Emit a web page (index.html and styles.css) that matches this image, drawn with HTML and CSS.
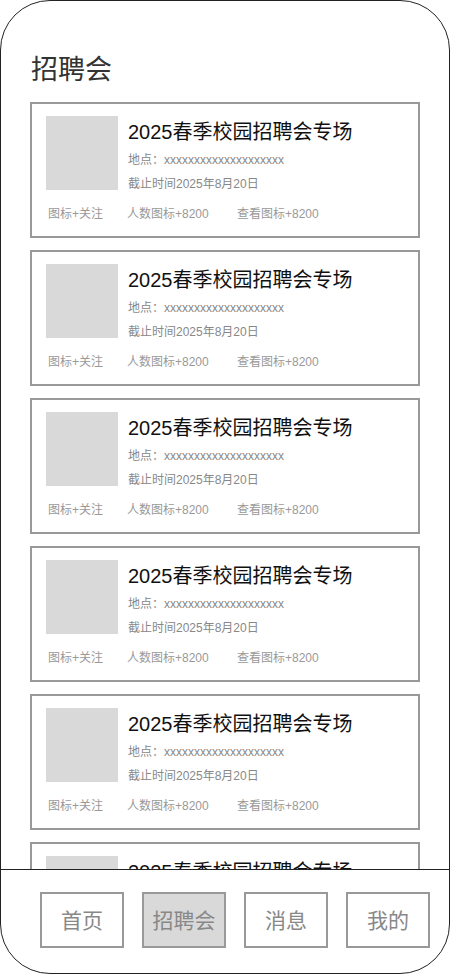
FILE: index.html
```html
<!DOCTYPE html>
<html lang="zh-CN">

<head>
    <meta charset="UTF-8">
    <title>招聘会</title>
    <link rel="stylesheet" href="styles.css">
</head>

<body>

    <div class="phone">

        <h1 class="page-title">招聘会</h1>

        <!-- Fair list start -->
        <div class="fair-list">

            <div class="fair-card">
                <div class="fair-top">
                    <div class="thumb"></div>
                    <div class="fair-info">
                        <div class="fair-name">2025春季校园招聘会专场</div>
                        <div class="fair-place">地点：xxxxxxxxxxxxxxxxxxxx</div>
                        <div class="fair-date">截止时间2025年8月20日</div>
                    </div>
                </div>
                <div class="fair-meta">
                    <span class="meta-follow">图标+关注</span>
                    <span class="meta-people">人数图标+8200</span>
                    <span>查看图标+8200</span>
                </div>
            </div>

            <div class="fair-card">
                <div class="fair-top">
                    <div class="thumb"></div>
                    <div class="fair-info">
                        <div class="fair-name">2025春季校园招聘会专场</div>
                        <div class="fair-place">地点：xxxxxxxxxxxxxxxxxxxx</div>
                        <div class="fair-date">截止时间2025年8月20日</div>
                    </div>
                </div>
                <div class="fair-meta">
                    <span class="meta-follow">图标+关注</span>
                    <span class="meta-people">人数图标+8200</span>
                    <span>查看图标+8200</span>
                </div>
            </div>

            <div class="fair-card">
                <div class="fair-top">
                    <div class="thumb"></div>
                    <div class="fair-info">
                        <div class="fair-name">2025春季校园招聘会专场</div>
                        <div class="fair-place">地点：xxxxxxxxxxxxxxxxxxxx</div>
                        <div class="fair-date">截止时间2025年8月20日</div>
                    </div>
                </div>
                <div class="fair-meta">
                    <span class="meta-follow">图标+关注</span>
                    <span class="meta-people">人数图标+8200</span>
                    <span>查看图标+8200</span>
                </div>
            </div>

            <div class="fair-card">
                <div class="fair-top">
                    <div class="thumb"></div>
                    <div class="fair-info">
                        <div class="fair-name">2025春季校园招聘会专场</div>
                        <div class="fair-place">地点：xxxxxxxxxxxxxxxxxxxx</div>
                        <div class="fair-date">截止时间2025年8月20日</div>
                    </div>
                </div>
                <div class="fair-meta">
                    <span class="meta-follow">图标+关注</span>
                    <span class="meta-people">人数图标+8200</span>
                    <span>查看图标+8200</span>
                </div>
            </div>

            <div class="fair-card">
                <div class="fair-top">
                    <div class="thumb"></div>
                    <div class="fair-info">
                        <div class="fair-name">2025春季校园招聘会专场</div>
                        <div class="fair-place">地点：xxxxxxxxxxxxxxxxxxxx</div>
                        <div class="fair-date">截止时间2025年8月20日</div>
                    </div>
                </div>
                <div class="fair-meta">
                    <span class="meta-follow">图标+关注</span>
                    <span class="meta-people">人数图标+8200</span>
                    <span>查看图标+8200</span>
                </div>
            </div>

            <div class="fair-card">
                <div class="fair-top">
                    <div class="thumb"></div>
                    <div class="fair-info">
                        <div class="fair-name">2025春季校园招聘会专场</div>
                        <div class="fair-place">地点：xxxxxxxxxxxxxxxxxxxx</div>
                        <div class="fair-date">截止时间2025年8月20日</div>
                    </div>
                </div>
                <div class="fair-meta">
                    <span class="meta-follow">图标+关注</span>
                    <span class="meta-people">人数图标+8200</span>
                    <span>查看图标+8200</span>
                </div>
            </div>

        </div>
        <!-- Fair list end -->

        <div class="tab-bar">
            <div class="tab">首页</div>
            <div class="tab active">招聘会</div>
            <div class="tab">消息</div>
            <div class="tab">我的</div>
        </div>

    </div>

</body>

</html>
```

FILE: styles.css
```css
:root {
    --frame: #222222;
    --border: #999999;
    --thumb: #d9d9d9;
    --text: #111111;
    --muted: #888888;
    --light: #999999;
}

* {
    box-sizing: border-box;
}

body {
    margin: 0;
    background: #ffffff;
    font-family: "Liberation Sans", "Noto Sans CJK SC", sans-serif;
    color: var(--text);
}

.phone {
    width: 450px;
    height: 974px;
    border: 1px solid var(--frame);
    border-radius: 50px;
    display: flex;
    flex-direction: column;
    overflow: hidden;
    background: #ffffff;
}

.page-title {
    margin: 0;
    padding: 49px 0 0 30px;
    height: 101px;
    font-size: 27px;
    font-weight: 400;
    line-height: 40px;
    color: #333333;
}

.fair-list {
    flex: 1;
    overflow: hidden;
    padding: 0 29px;
    display: flex;
    flex-direction: column;
    gap: 12px;
}

.fair-card {
    flex-shrink: 0;
    height: 136px;
    border: 2px solid var(--border);
    padding: 12px 14px 0 14px;
}

.fair-top {
    display: flex;
    gap: 10px;
}

.thumb {
    width: 72px;
    height: 74px;
    background: var(--thumb);
    flex-shrink: 0;
}

.fair-info {
    padding-top: 3px;
}

.fair-name {
    font-size: 20px;
    line-height: 26px;
    color: var(--text);
}

.fair-place {
    font-size: 12px;
    line-height: 14px;
    margin-top: 8px;
    color: var(--muted);
}

.fair-date {
    font-size: 12px;
    line-height: 16px;
    margin-top: 9px;
    color: var(--muted);
}

.fair-meta {
    margin-top: 14px;
    padding-left: 2px;
    display: flex;
    font-size: 12px;
    line-height: 16px;
    color: var(--light);
}

.meta-follow {
    width: 79px;
}

.meta-people {
    width: 110px;
}

.tab-bar {
    flex-shrink: 0;
    height: 104px;
    border-top: 1px solid var(--frame);
    display: flex;
    gap: 18px;
    padding: 22px 0 0 39px;
}

.tab {
    width: 84px;
    height: 56px;
    border: 2px solid var(--border);
    display: flex;
    align-items: center;
    justify-content: center;
    font-size: 21px;
    line-height: 1;
    color: var(--muted);
}

.tab.active {
    background: var(--thumb);
}
```
